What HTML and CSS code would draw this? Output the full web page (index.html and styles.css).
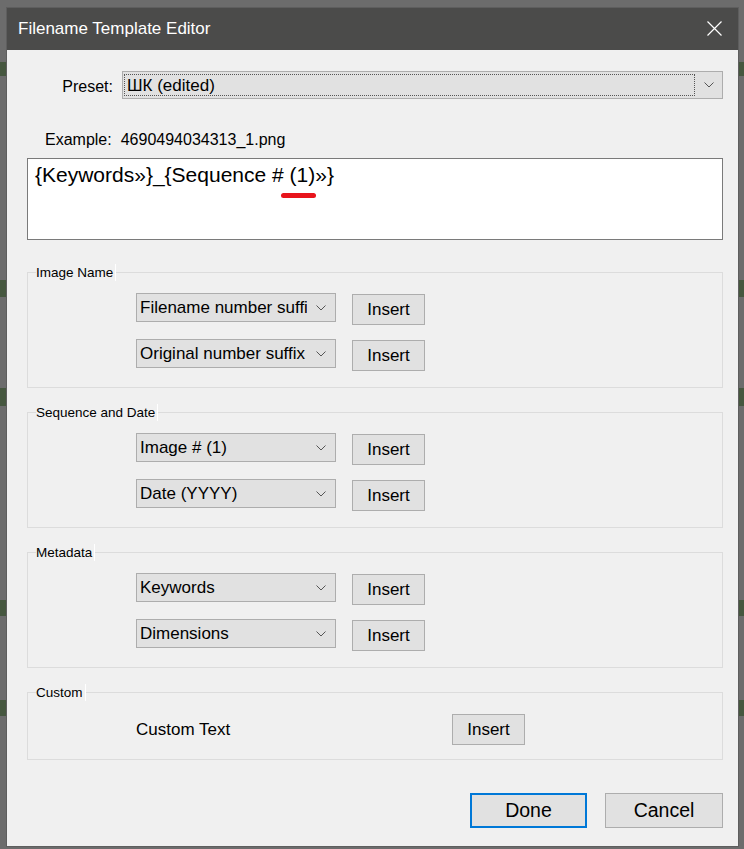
FILE: index.html
```html
<!DOCTYPE html>
<html lang="en">
<head>
<meta charset="utf-8">
<title>Filename Template Editor</title>
<link rel="stylesheet" href="styles.css">
</head>
<body>
<div class="dialog">
  <div class="titlebar">
    <span class="title">Filename Template Editor</span>
    <svg class="close" width="15" height="15" viewBox="0 0 15 15"><path d="M0.5 0.5 L14.5 14.5 M14.5 0.5 L0.5 14.5" stroke="#fff" stroke-width="1.2" fill="none"/></svg>
  </div>
  <div class="content">
    <div class="preset-row">
      <span class="preset-label">Preset:</span>
      <div class="select">
        <span class="focus-rect">ШК (edited)</span>
        <span class="chev"><svg width="10" height="6" viewBox="0 0 10 6"><path d="M0.5 0.5 L5 5 L9.5 0.5" fill="none" stroke="#555" stroke-width="1"/></svg></span>
      </div>
    </div>
    <div class="example"><span>Example:</span><span class="example-value">4690494034313_1.png</span></div>
    <div class="template-box">{Keywords»}_{Sequence # (1)»}<span class="mark"></span></div>

    <fieldset class="group group-first">
      <legend>Image Name</legend>
      <div class="rows">
        <div class="row">
          <div class="combo"><span class="combo-text">Filename number suffix</span><span class="chev"><svg width="10" height="6" viewBox="0 0 10 6"><path d="M0.5 0.5 L5 5 L9.5 0.5" fill="none" stroke="#555" stroke-width="1"/></svg></span></div>
          <button class="btn insert">Insert</button>
        </div>
        <div class="row">
          <div class="combo"><span class="combo-text">Original number suffix</span><span class="chev"><svg width="10" height="6" viewBox="0 0 10 6"><path d="M0.5 0.5 L5 5 L9.5 0.5" fill="none" stroke="#555" stroke-width="1"/></svg></span></div>
          <button class="btn insert">Insert</button>
        </div>
      </div>
    </fieldset>

    <fieldset class="group">
      <legend>Sequence and Date</legend>
      <div class="rows">
        <div class="row">
          <div class="combo"><span class="combo-text">Image # (1)</span><span class="chev"><svg width="10" height="6" viewBox="0 0 10 6"><path d="M0.5 0.5 L5 5 L9.5 0.5" fill="none" stroke="#555" stroke-width="1"/></svg></span></div>
          <button class="btn insert">Insert</button>
        </div>
        <div class="row">
          <div class="combo"><span class="combo-text">Date (YYYY)</span><span class="chev"><svg width="10" height="6" viewBox="0 0 10 6"><path d="M0.5 0.5 L5 5 L9.5 0.5" fill="none" stroke="#555" stroke-width="1"/></svg></span></div>
          <button class="btn insert">Insert</button>
        </div>
      </div>
    </fieldset>

    <fieldset class="group">
      <legend>Metadata</legend>
      <div class="rows">
        <div class="row">
          <div class="combo"><span class="combo-text">Keywords</span><span class="chev"><svg width="10" height="6" viewBox="0 0 10 6"><path d="M0.5 0.5 L5 5 L9.5 0.5" fill="none" stroke="#555" stroke-width="1"/></svg></span></div>
          <button class="btn insert">Insert</button>
        </div>
        <div class="row">
          <div class="combo"><span class="combo-text">Dimensions</span><span class="chev"><svg width="10" height="6" viewBox="0 0 10 6"><path d="M0.5 0.5 L5 5 L9.5 0.5" fill="none" stroke="#555" stroke-width="1"/></svg></span></div>
          <button class="btn insert">Insert</button>
        </div>
      </div>
    </fieldset>

    <fieldset class="group group-custom">
      <legend>Custom</legend>
      <div class="custom-row">
        <span class="custom-label">Custom Text</span>
        <button class="btn insert">Insert</button>
      </div>
    </fieldset>

    <div class="footer">
      <button class="btn big done">Done</button>
      <button class="btn big cancel">Cancel</button>
    </div>
  </div>
</div>
</body>
</html>
```

FILE: styles.css
```css
* { box-sizing: border-box; }
html, body { margin: 0; height: 100%; }
body {
  overflow: hidden;
  font-family: "Liberation Sans", Arial, sans-serif;
  color: #000;
  background: linear-gradient(to bottom, #6c6c6c 0 62px, #46573f 62px 76px, #6c6c6c 76px 280px, #46573f 280px 297px, #6c6c6c 297px 388px, #46573f 388px 406px, #6c6c6c 406px 600px, #46573f 600px 616px, #6c6c6c 616px 700px, #46573f 700px 716px, #6c6c6c 716px);
}
.dialog {
  margin: 7px 0 0 6px;
  width: 733px;
  border: 1px solid #5e5e5e;
  background: #f0f0f0;
}
.titlebar {
  height: 42px;
  background: #4b4b4a;
  color: #fff;
  display: flex;
  align-items: center;
  justify-content: space-between;
  padding: 0 16px 0 11px;
}
.title { font-size: 17px; }
.close { margin-bottom: 2px; }
.content { padding: 21px 15px 18px 20px; }

.preset-row { display: flex; align-items: center; gap: 9px; }
.preset-label { width: 86px; text-align: right; font-size: 16px; padding-top: 3px; }
.select {
  flex: 1;
  height: 28px;
  border: 1px solid #adadad;
  background: #e1e1e1;
  display: flex;
  padding: 2px 0 2px 1px;
}
.focus-rect {
  flex: 1;
  border: 1px dotted #555;
  padding-left: 2px;
  font-size: 17px;
  line-height: 21px;
  white-space: nowrap;
}
.chev { display: flex; align-items: center; justify-content: center; }
.select .chev { width: 27px; }

.example { margin-top: 31px; padding-left: 18px; font-size: 16px; line-height: 20px; }
.example-value { margin-left: 9px; }

.template-box {
  position: relative;
  margin-top: 8px;
  height: 82px;
  border: 1px solid #7a7a7a;
  background: #fff;
  padding: 4px 7px;
  font-size: 21px;
  line-height: 24px;
}
.mark {
  position: absolute;
  left: 253px;
  top: 34px;
  width: 35px;
  height: 5px;
  border-radius: 3px;
  background: #e8141c;
}

.group {
  margin: 16px 0 0;
  padding: 12px 0 16px 8px;
  border: 1px solid #dcdcdc;
  min-width: 0;
}
.group-first { margin-top: 24px; }
.group legend {
  padding: 0 2px 0 0;
  margin: 0;
  font-size: 13.5px;
  line-height: 17px;
  border-right: 1px solid #fff;
}
.rows { padding-left: 100px; display: flex; flex-direction: column; gap: 14px; }
.row { display: flex; align-items: flex-start; gap: 16px; }
.combo {
  width: 200px;
  height: 29px;
  border: 1px solid #adadad;
  background: #e1e1e1;
  display: flex;
  align-items: center;
  padding-left: 3px;
}
.combo-text { flex: 1; overflow: hidden; white-space: nowrap; font-size: 17px; }
.combo .chev { width: 28px; }

.btn {
  font-family: inherit;
  color: #000;
  background: #e1e1e1;
  border: 1px solid #adadad;
  padding: 0;
  margin: 0;
}
.insert { width: 73px; height: 31px; margin-top: 1px; font-size: 17px; }

.group-custom { padding: 13px 0 14px 8px; }
.custom-row { padding-left: 100px; display: flex; align-items: center; }
.custom-label { width: 316px; font-size: 17px; }
.group-custom .insert { margin-top: 0; }

.footer { margin-top: 33px; display: flex; justify-content: flex-end; gap: 18px; }
.big { height: 35px; font-size: 19.5px; }
.done { width: 117px; border: 2px solid #0078d7; }
.cancel { width: 118px; }
```
